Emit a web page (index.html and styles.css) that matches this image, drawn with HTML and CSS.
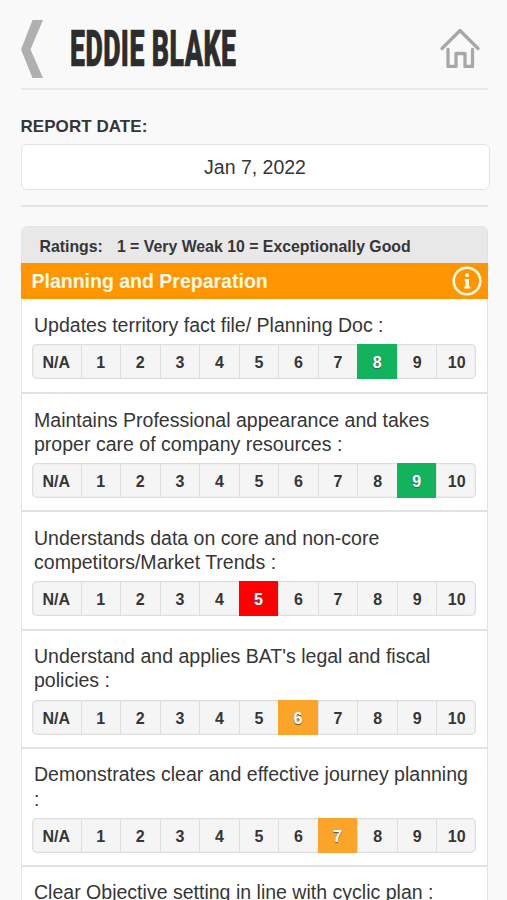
FILE: index.html
```html
<!DOCTYPE html>
<html lang="en">
<head>
<meta charset="utf-8">
<title>Eddie Blake</title>
<link rel="stylesheet" href="styles.css">
</head>
<body>
<header class="header">
  <svg class="back" viewBox="0 0 22 58"><path d="M11.5 0H22L9.5 29.5 22 58H11.5L0 29.5Z"/></svg>
  <h1 class="title"><span class="title-text">EDDIE BLAKE</span></h1>
  <svg class="home" viewBox="0 0 40 40"><path d="M2 20.500 20 2.500 38 20.500M8 21.500V38.500H16V25.500H25V38.500H32.500V21.500"/></svg>
</header>
<section class="report">
  <h2 class="label"><span>REPORT DATE:</span></h2>
  <div class="date"><span>Jan 7, 2022</span></div>
</section>
<main class="card">
  <div class="legend"><span class="legend-key">Ratings:</span><span class="legend-scale">1 = Very Weak 10 = Exceptionally Good</span></div>
  <div class="section"><span>Planning and Preparation</span>
    <svg class="info" viewBox="0 0 30 30"><circle class="ring" cx="15" cy="15" r="13.300"/><circle cx="15" cy="9.300" r="2"/><path d="M12.500 13H17V20.500H18.200V22.500H12.300V20.500H13.400V14.800H12.500Z"/></svg>
  </div>
  <div class="item short">
    <p class="question"><span>Updates territory fact file/ Planning Doc :</span></p>
    <div class="scale"><span>N/A</span><span>1</span><span>2</span><span>3</span><span>4</span><span>5</span><span>6</span><span>7</span><span class="good">8</span><span>9</span><span>10</span></div>
  </div>
  <div class="item">
    <p class="question"><span>Maintains Professional appearance and takes</span><br><span>proper care of company resources :</span></p>
    <div class="scale"><span>N/A</span><span>1</span><span>2</span><span>3</span><span>4</span><span>5</span><span>6</span><span>7</span><span>8</span><span class="good">9</span><span>10</span></div>
  </div>
  <div class="item">
    <p class="question"><span>Understands data on core and non-core</span><br><span>competitors/Market Trends :</span></p>
    <div class="scale"><span>N/A</span><span>1</span><span>2</span><span>3</span><span>4</span><span class="weak">5</span><span>6</span><span>7</span><span>8</span><span>9</span><span>10</span></div>
  </div>
  <div class="item">
    <p class="question"><span>Understand and applies BAT's legal and fiscal</span><br><span>policies :</span></p>
    <div class="scale"><span>N/A</span><span>1</span><span>2</span><span>3</span><span>4</span><span>5</span><span class="fair">6</span><span>7</span><span>8</span><span>9</span><span>10</span></div>
  </div>
  <div class="item">
    <p class="question"><span>Demonstrates clear and effective journey planning</span><br><span>:</span></p>
    <div class="scale"><span>N/A</span><span>1</span><span>2</span><span>3</span><span>4</span><span>5</span><span>6</span><span class="fair">7</span><span>8</span><span>9</span><span>10</span></div>
  </div>
  <div class="item last">
    <p class="question"><span>Clear Objective setting in line with cyclic plan :</span></p>
  </div>
</main>
</body>
</html>
```
FILE: styles.css
```css
* { box-sizing: border-box; }
html, body { height: 900px; overflow: hidden; }
body {
  margin: 0;
  padding: 0 19.5px 0 20.5px;
  background: #f9f9f9;
  color: #363636;
  font-family: "Liberation Sans", Arial, sans-serif;
}
.header {
  display: flex;
  height: 90px;
  border-bottom: 2px solid #e8e8e8;
}
.back { width: 22px; height: 58px; margin-top: 19.5px; fill: #b0b0b0; }
.title { width: 170px; margin: 18px 0 0 27.5px; font: 900 50px/62px Roboto, sans-serif; color: #2d2d2d; white-space: nowrap; }
.title-text { display: inline-block; transform: scaleX(.535); transform-origin: left; letter-spacing: .8px; -webkit-text-stroke: .6px #2d2d2d; }
.home { width: 40px; height: 40px; margin: 28px 8px 0 auto; fill: none; stroke: #a8a8a8; stroke-width: 3.3; stroke-linecap: round; stroke-linejoin: round; }
.report { height: 117px; padding-top: 27px; border-bottom: 2px solid #e3e3e3; }
.label { margin: 0; font-size: 17px; line-height: 20px; letter-spacing: .05px; }
.date {
  height: 46px;
  margin: 7px -2px 0 0;
  border: 1.5px solid #e3e3e3;
  border-radius: 6px;
  background: #fff;
  font-size: 19.5px;
  line-height: 44px;
  text-align: center;
}
.card {
  height: 674px;
  margin-top: 19px;
  border: solid #e3e3e3;
  border-width: 1.5px 1.5px 0;
  border-radius: 6px 6px 0 0;
  background: #fff;
}
.legend { display: flex; height: 36px; padding-left: 18px; background: #e8e8e8; border-radius: 5px 5px 0 0; font-size: 15.85px; font-weight: bold; line-height: 39px; white-space: nowrap; }
.legend-scale { margin-left: 14px; }
.section {
  display: flex;
  align-items: center;
  justify-content: space-between;
  height: 36px;
  margin: 0 -1px;
  padding: 0 6px 0 11px;
  background: #ff9500;
  color: #fffbea;
  font-size: 19.5px;
  font-weight: bold;
}
.info { width: 30px; height: 30px; fill: #fffbea; }
.ring { fill: none; stroke: #fffbea; stroke-width: 2.6; }
.item { height: 118.3px; padding: 13.6px 10.5px 0; border-bottom: 2px solid #e3e3e3; }
.short { height: 95px; padding-top: 14px; }
.last { height: 33px; padding-top: 13px; border: 0; }
.question { margin: 0 0 7px 2px; font-size: 19.54px; line-height: 24.3px; white-space: nowrap; }
.scale {
  display: grid;
  grid-template-columns: 48.500px repeat(10, 39.560px);
  grid-template-rows: 35px;
  width: 444px;
  height: 35px;
  border-radius: 5px;
  box-shadow: inset 0 0 0 1.3px #dedede;
  background: #f5f5f5;
  font-size: 16px;
  font-weight: bold;
  line-height: 37px;
  text-align: center;
}
.scale span + span { border-left: 1px solid #dedede; }
.scale .good, .scale .weak, .scale .fair { border-left: 0; color: #fff; text-shadow: 0 1px 1px #456; }
.good { background: #13b35d; }
.weak { background: #f00; }
.fair { background: #faa52a; }
```
